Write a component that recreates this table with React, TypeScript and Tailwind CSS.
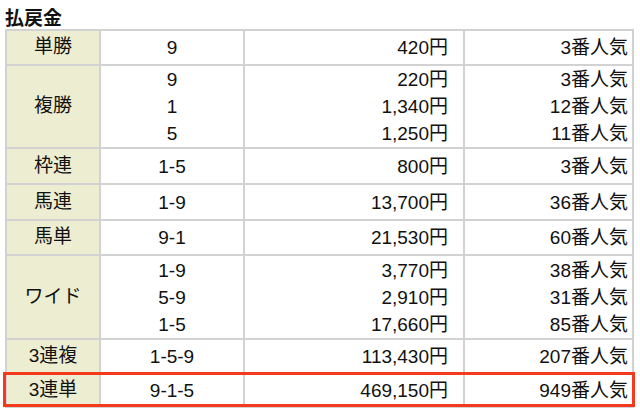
import React from "react";

type Row = { label: string; combos: string[]; pays: string[]; pops: string[]; h: string };

const rows: Row[] = [
  { label: "単勝", combos: ["9"], pays: ["420円"], pops: ["3番人気"], h: "h-[33px]" },
  { label: "複勝", combos: ["9", "1", "5"], pays: ["220円", "1,340円", "1,250円"], pops: ["3番人気", "12番人気", "11番人気"], h: "h-[81px]" },
  { label: "枠連", combos: ["1-5"], pays: ["800円"], pops: ["3番人気"], h: "h-[34px]" },
  { label: "馬連", combos: ["1-9"], pays: ["13,700円"], pops: ["36番人気"], h: "h-[34px]" },
  { label: "馬単", combos: ["9-1"], pays: ["21,530円"], pops: ["60番人気"], h: "h-[33px]" },
  { label: "ワイド", combos: ["1-9", "5-9", "1-5"], pays: ["3,770円", "2,910円", "17,660円"], pops: ["38番人気", "31番人気", "85番人気"], h: "h-[82px]" },
  { label: "3連複", combos: ["1-5-9"], pays: ["113,430円"], pops: ["207番人気"], h: "h-[33px]" },
  { label: "3連単", combos: ["9-1-5"], pays: ["469,150円"], pops: ["949番人気"], h: "h-[31px]" },
];

function Lines({ items }: { items: string[] }) {
  return (
    <>
      {items.map((t, i) => (
        <div key={i} className="leading-[27px]">{t}</div>
      ))}
    </>
  );
}

export default function App() {
  return (
    <div
      className="relative w-[640px] h-[415px] bg-white text-[#111] overflow-hidden"
      style={{ fontFamily: '"Liberation Sans", "Noto Sans CJK JP", sans-serif' }}
    >
      <div className="pl-[5px] pt-[8px] h-[29px] text-[19px] leading-[21px] font-bold">払戻金</div>
      <div className="ml-[5px] w-[629px] bg-[#d2d2d2] p-[2px] grid grid-cols-[92px_142px_218px_167px] gap-[2px] text-[19px]">
        {rows.map((r) => (
          <React.Fragment key={r.label}>
            <div className={`${r.h} bg-[#ededd2] flex items-center justify-center`}>{r.label}</div>
            <div className={`${r.h} bg-white flex flex-col justify-center items-center`}>
              <Lines items={r.combos} />
            </div>
            <div className={`${r.h} bg-white flex flex-col justify-center items-end pr-[15px]`}>
              <Lines items={r.pays} />
            </div>
            <div className={`${r.h} bg-white flex flex-col justify-center items-end pr-[4px]`}>
              <Lines items={r.pops} />
            </div>
          </React.Fragment>
        ))}
      </div>
      <div className="absolute left-[3px] top-[372px] w-[632px] h-[35px] border-[3px] border-[#f5391c]" />
    </div>
  );
}
